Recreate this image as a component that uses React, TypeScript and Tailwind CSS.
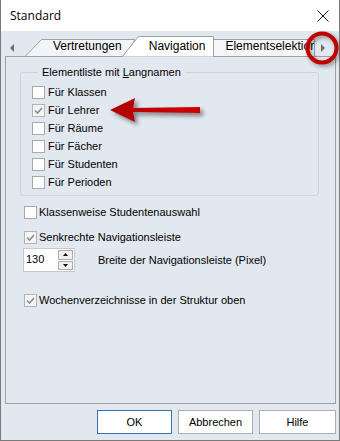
const ui = { fontFamily: '"Liberation Sans", Arial, sans-serif' };

const Box = ({ checked = false }: { checked?: boolean }) => (
  <span
    className={`flex h-[13px] w-[13px] shrink-0 items-center justify-center border ${
      checked ? "border-[#b4b4b4] bg-[#f4f4f4]" : "border-[#a8a8a8] bg-white"
    }`}
  >
    {checked && (
      <svg width="9" height="9" viewBox="0 0 9 9">
        <path d="M1 4.5 L3.5 7 L8 2" fill="none" stroke="#8c8c8c" strokeWidth="1.6" />
      </svg>
    )}
  </span>
);

const Check = ({ label, checked = false, gap = "gap-[3px]" }: { label: string; checked?: boolean; gap?: string }) => (
  <div className={`flex h-[18px] items-center ${gap}`}>
    <Box checked={checked} />
    <span className="text-[11px] leading-none text-black">{label}</span>
  </div>
);

const TabStrip = () => (
  <div className="relative h-[26px]">
    <svg className="absolute inset-0" width="338" height="26" viewBox="0 0 338 26">
      {/* scroll arrows */}
      <polygon points="13,13 13,21 9,17" fill="#6b6b6b" />
      <polygon points="319,13 319,21 323,17" fill="#6b6b6b" />
      {/* Vertretungen */}
      <polygon points="24,25.5 40.5,8.5 134,8.5 124,25.5" fill="#f1f4f8" stroke="#a0a0a0" />
      {/* Elementselektion */}
      <rect x="212.5" y="8.5" width="101" height="17" fill="#f4f6f9" stroke="#a0a0a0" />
      {/* Navigation (active) */}
      <polygon points="121,26 137.5,5.5 212.5,5.5 212.5,26" fill="#ffffff" stroke="#a0a0a0" />
      <line x1="4" y1="25.5" x2="121" y2="25.5" stroke="#a0a0a0" />
      <line x1="213" y1="25.5" x2="335" y2="25.5" stroke="#a0a0a0" />
      <rect x="314" y="9" width="22" height="16" fill="#e2e8f0" />
      <polygon points="320,13 320,21 324,17" fill="#6b6b6b" />
    </svg>
    <div className="relative flex h-full items-end text-[12px] leading-none text-black">
      <span className="ml-[52px] pb-[5px]">Vertretungen</span>
      <span className="ml-[27px] pb-[5px]">Navigation</span>
      <span className="ml-[20px] w-[89px] overflow-hidden whitespace-nowrap pb-[5px]">Elementselektion</span>
    </div>
  </div>
);

const Spin = () => (
  <div className="flex h-[24px] w-[52px] border border-[#c8c8c8] bg-white">
    <span className="flex-1 pl-[2px] pt-[5px] text-[11px] leading-none text-black">130</span>
    <div className="flex w-[16px] flex-col gap-px py-px pr-px">
      <span className="flex flex-1 items-center justify-center border border-[#acacac] bg-[#efefef]">
        <svg width="5" height="3" viewBox="0 0 5 3"><polygon points="0,3 5,3 2.5,0" fill="#000" /></svg>
      </span>
      <span className="flex flex-1 items-center justify-center border border-[#acacac] bg-[#efefef]">
        <svg width="5" height="3" viewBox="0 0 5 3"><polygon points="0,0 5,0 2.5,3" fill="#000" /></svg>
      </span>
    </div>
  </div>
);

const Btn = ({ label, primary = false, w = "w-[75px]" }: { label: string; primary?: boolean; w?: string }) => (
  <button
    className={`h-[24px] ${w} border bg-white text-[11px] leading-none text-black ${
      primary ? "border-[#3d6fb7]" : "border-[#adadad]"
    }`}
  >
    {label}
  </button>
);

export default function App() {
  return (
    <div style={ui} className="relative flex h-[441px] w-[340px] flex-col border-x border-b border-[#7a7a7a] bg-[#e2e8f0]">
      {/* Title bar */}
      <div className="flex h-[31px] shrink-0 items-center justify-between bg-white pl-[9px] pr-[10px]">
        <span className="text-[12px] leading-none text-black" style={{ fontFamily: '"Open Sans", "Liberation Sans", sans-serif' }}>
          Standard
        </span>
        <svg width="12" height="12" viewBox="0 0 12 12">
          <path d="M0.5 0.5 L11.5 11.5 M11.5 0.5 L0.5 11.5" stroke="#111" strokeWidth="1" />
        </svg>
      </div>

      <TabStrip />

      {/* Tab page */}
      <div className="relative ml-[4px] h-[347px] w-[331px] border-x border-b border-[#a0a0a0]">
        <fieldset className="ml-[14px] mr-[16px] mt-[9px] rounded-[3px] border border-[#cdd2d9] pb-[4px] pl-[11px]">
          <legend className="ml-[6px] px-[4px] text-[11px] leading-[13px] text-black">
            Elementliste mit <span className="underline">L</span>angnamen
          </legend>
          <div className="mt-[4px] flex flex-col">
            <Check label="Für Klassen" />
            <Check label="Für Lehrer" checked />
            <Check label="Für Räume" />
            <Check label="Für Fächer" />
            <Check label="Für Studenten" />
            <Check label="Für Perioden" />
          </div>
        </fieldset>

        <div className="ml-[18px] mt-[7px] flex flex-col">
          <Check label="Klassenweise Studentenauswahl" gap="gap-[2px]" />
          <div className="mt-[7px]">
            <Check label="Senkrechte Navigationsleiste" checked gap="gap-[2px]" />
          </div>
          <div className="-ml-[1px] mt-[2px] flex items-center gap-[23px]">
            <Spin />
            <span className="text-[11px] leading-none text-black">Breite der Navigationsleiste (Pixel)</span>
          </div>
          <div className="mt-[19px]">
            <Check label="Wochenverzeichnisse in der Struktur oben" checked gap="gap-[2px]" />
          </div>
        </div>

        {/* Red annotation arrow */}
        <svg
          className="absolute left-[102px] top-[37px]"
          width="106"
          height="36"
          viewBox="0 0 106 36"
          style={{ filter: "drop-shadow(3px 3px 2px rgba(0,0,0,0.45))" }}
        >
          <defs>
            <linearGradient id="shaft" x1="0" y1="0" x2="1" y2="0">
              <stop offset="0" stopColor="#b00000" />
              <stop offset="1" stopColor="#d40000" />
            </linearGradient>
          </defs>
          <polygon points="2,16 27,4 25,14 92,13 92,19 25,18 27,28" fill="url(#shaft)" />
        </svg>
      </div>

      {/* Buttons */}
      <div className="mt-[6px] flex justify-end gap-[6px] pr-[3px]">
        <Btn label="OK" primary />
        <Btn label="Abbrechen" />
        <Btn label="Hilfe" w="w-[77px]" />
      </div>

      {/* Red circle highlighting the tab scroll button */}
      <svg
        className="absolute left-[302px] top-[29px]"
        width="38"
        height="40"
        viewBox="0 0 38 40"
        style={{ filter: "drop-shadow(2px 2px 2px rgba(0,0,0,0.4))" }}
      >
        <circle cx="19" cy="19" r="14.5" fill="none" stroke="#c00000" strokeWidth="4" />
      </svg>
    </div>
  );
}
